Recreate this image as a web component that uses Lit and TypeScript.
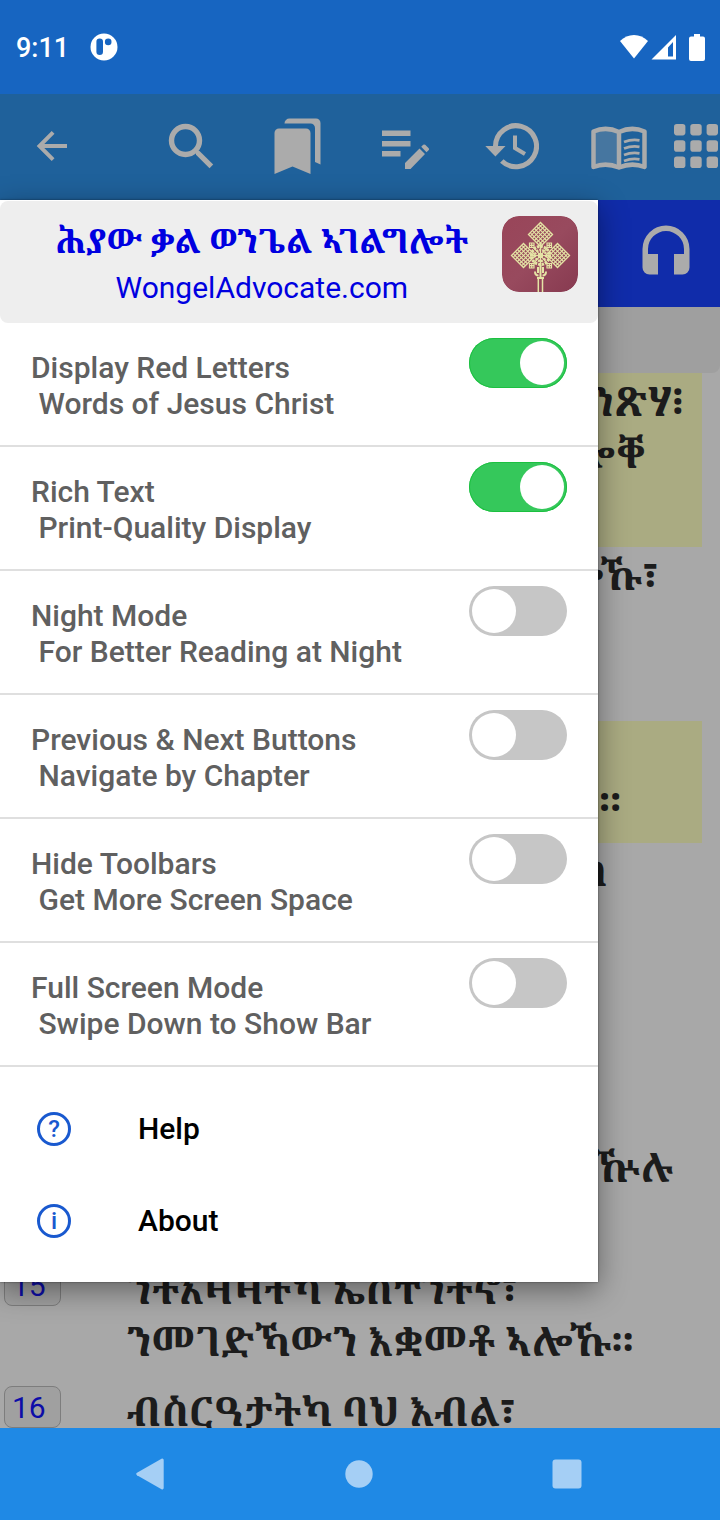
import { LitElement, html, css, svg, nothing } from "lit";
import { customElement, property, state } from "lit/decorators.js";
import { classMap } from "lit/directives/class-map.js";
import { styleMap } from "lit/directives/style-map.js";

interface Setting {
  title: string;
  detail: string;
  on: boolean;
}

/** A line with an inset is aligned to the right edge, that many pixels in. */
interface VerseLine {
  text: string;
  inset?: number;
}

interface Verse {
  number?: number;
  marked?: boolean;
  lines: VerseLine[];
}

const blank: VerseLine = { text: "" };

const verses: Verse[] = [
  { marked: true, lines: [{ text: "ንጽሃ፧", inset: 15 }, { text: "ሎቐ", inset: 53 }, blank] },
  { lines: [{ text: "ሎኹ፣", inset: 40 }, blank, blank] },
  { marked: true, lines: [blank, { text: "።", inset: 77 }] },
  { lines: [{ text: "ስ", inset: 91 }, blank] },
  { lines: [blank, blank] },
  { lines: [blank, { text: "ዅሉ", inset: 25 }, blank] },
  { number: 15, lines: [{ text: "ንትእዛዛትካ ኤስተንትኖ፣" }, { text: "ንመገድኻውን እቋመቶ ኣሎኹ።" }] },
  { number: 16, lines: [{ text: "ብስርዓታትካ ባህ እብል፣" }] },
];

@customElement("status-bar")
class StatusBar extends LitElement {
  static styles = css`
    :host {
      display: flex;
      align-items: center;
      height: 94px;
      padding: 0 15px 0 16px;
      background: #1765c1;
      color: #fff;
      box-sizing: border-box;
      flex: none;
    }
    .time {
      font: 500 27px/32px Roboto, sans-serif;
      margin-right: 21px;
      margin-top: 2px;
    }
    .signals {
      margin-left: auto;
      display: flex;
      align-items: center;
      gap: 3px;
    }
    .battery {
      margin-left: 10px;
    }
    svg {
      display: block;
      fill: currentColor;
    }
  `;
  render() {
    return html`
      <span class="time">9:11</span>
      <svg width="28" height="28" viewBox="0 0 28 28" aria-hidden="true">
        <path fill-rule="evenodd" d="M14 .5a13.500 13.500 0 1 0 0 27a13.500 13.500 0 1 0 0-27zM9.700 5.500a3.300 3.300 0 0 1 3.300 3.300v10a3.300 3.300 0 0 1-6.600 0v-10a3.300 3.300 0 0 1 3.300-3.300zM18.200 5.600a3.300 3.300 0 1 1 0 6.600a3.300 3.300 0 0 1 0-6.600z" />
      </svg>
      <div class="signals">
        <svg width="28" height="26" viewBox="0 0 28 26" aria-hidden="true"><path d="M14 24.500 0 7C4 3.300 8.700 1 14 1s10 2.300 14 6z" /></svg>
        <svg width="25" height="26" viewBox="0 0 25 26" aria-hidden="true"><path fill-rule="evenodd" d="M25 1v24.500H.5zM22 8l-5 5.500V22.500h5z" /></svg>
        <svg class="battery" width="16" height="27" viewBox="0 0 16 27" aria-hidden="true"><path d="M5 0h6v2.500h3a2 2 0 0 1 2 2V25a2 2 0 0 1-2 2H2a2 2 0 0 1-2-2V4.500a2 2 0 0 1 2-2h3z" /></svg>
      </div>
    `;
  }
}

@customElement("tool-bar")
class ToolBar extends LitElement {
  static styles = css`
    :host {
      display: grid;
      grid-template-columns: 104px 33px repeat(5, 1fr) 48px;
      height: 106px;
      box-sizing: border-box;
      padding-bottom: 2px;
      flex: none;
      background: #1f619b;
      color: #ababab;
    }
    button {
      border: 0;
      padding: 0;
      background: none;
      color: inherit;
      display: grid;
      place-items: center;
    }
    .back {
      grid-column: 1 / span 2;
      width: 104px;
    }
    svg {
      display: block;
      fill: currentColor;
    }
  `;
  render() {
    return html`
      <button class="back" aria-label="Back">
        <svg width="32" height="32" viewBox="0 0 32 32"><path d="M31 14v4H8.300l10.200 10.200-2.800 2.800L.7 16 15.700 1l2.800 2.800L8.300 14z" /></svg>
      </button>
      <button aria-label="Search">
        <svg width="46" height="46" viewBox="0 0 46 46">
          <circle cx="17.500" cy="17.500" r="14" fill="none" stroke="currentColor" stroke-width="5.400" />
          <path d="M31.500 28 45.200 41.500 41.500 45.200 28 31.700V28z" />
        </svg>
      </button>
      <button aria-label="Bookmarks">
        <svg width="48" height="58" viewBox="0 0 48 58">
          <path d="M5 11.500h27a4.500 4.500 0 0 1 4.500 4.500v41L18.500 49.500.5 57V16A4.500 4.500 0 0 1 5 11.500z" />
          <path d="M10.500 6.500A5 5 0 0 1 15.500 1.500H42a4.500 4.500 0 0 1 4.500 4.500v41.500L41 45V11a4.500 4.500 0 0 0-4.500-4.500z" />
        </svg>
      </button>
      <button aria-label="Notes">
        <svg width="48" height="46" viewBox="0 -2 48 46">
          <path d="M1 5.500h28.500v5.500H1zM1 16h28.500v5.500H1zM1 26h18.500v5.500H1zM24 38 38.500 23.500l5.500 5.500L29.500 44H24zM40.200 21.800l2-2a1.600 1.600 0 0 1 2 0l3.300 3.300a1.600 1.600 0 0 1 0 2.200l-2 2z" />
        </svg>
      </button>
      <button aria-label="History">
        <svg width="54" height="48" viewBox="0 0 54 48">
          <g fill="none" stroke="currentColor" stroke-width="5">
            <path d="M10.500 25v-1a20.500 20.500 0 1 1 6.300 15" />
            <path stroke-width="4" d="M30 13.500v12.500l10 6" />
          </g>
          <path d="M.3 24h20.200L10.400 34.500z" />
        </svg>
      </button>
      <button aria-label="Read">
        <svg width="58" height="52" viewBox="0 -6 58 52">
          <path opacity=".28" d="M4 6q12-5 24 0v33q-12-5-24 0z" />
          <path fill="none" stroke="currentColor" stroke-width="4.500" stroke-linejoin="round" d="M29 6Q16 0 3.500 5.500V41Q16 36 29 41.500Q42 36 54.500 41V5.500Q42 0 29 6zV41" />
          <path fill="none" stroke="currentColor" stroke-width="2.700" d="M34 16q7.500-3 15.500-1.700M34 22.500q7.500-3 15.500-1.700M34 29q7.500-3 15.500-1.700M34 35q7.500-3 15.500-1.700" />
        </svg>
      </button>
      <button aria-label="All books">
        <svg width="44" height="44" viewBox="0 0 44 44">
          ${[0, 16.300, 32.600].map((y) => [0, 16.300, 32.600].map((x) => svg`<rect x=${x} y=${y} width="11.400" height="11.400" rx="2.800" />`))}
        </svg>
      </button>
    `;
  }
}

@customElement("verse-list")
class VerseList extends LitElement {
  static styles = css`
    :host {
      display: block;
      font-family: "Noto Serif Ethiopic", "Noto Sans Ethiopic", "Abyssinica SIL", FreeSerif, serif;
    }
    .verse {
      display: grid;
      grid-template-columns: 123px 1fr;
      padding-right: 18px;
    }
    .number {
      justify-self: start;
      align-self: start;
      box-sizing: border-box;
      width: 57px;
      height: 42px;
      margin: 3px 0 0 4px;
      padding-left: 7px;
      border: 1px solid #7d7d7d;
      border-radius: 8px;
      background: #a0a0a0;
      color: #0d0da8;
      text-decoration: none;
      font: 30px/42px Roboto, sans-serif;
    }
    .text {
      grid-column: 2;
      padding: 2px 4px 16px;
      color: #1c1c1c;
    }
    .marked {
      background: #aaab82;
    }
    .line {
      height: 52px;
      font-size: 40px;
      font-weight: 700;
      line-height: 52px;
      white-space: nowrap;
    }
    .inset {
      display: flex;
      justify-content: flex-end;
    }
  `;
  render() {
    return verses.map(
      (verse) => html`
        <div class="verse">
          ${verse.number ? html`<a class="number" href="#verse-${verse.number}">${verse.number}</a>` : nothing}
          <div class=${classMap({ text: true, marked: !!verse.marked })}>
            ${verse.lines.map((line) =>
              line.inset === undefined
                ? html`<div class="line">${line.text}</div>`
                : html`<div class="line inset" style=${styleMap({ paddingRight: `${line.inset}px` })}>${line.text}</div>`
            )}
          </div>
        </div>
      `
    );
  }
}

@customElement("setting-row")
class SettingRow extends LitElement {
  @property() title = "";
  @property() detail = "";
  @property({ type: Boolean }) on = false;

  static styles = css`
    :host {
      display: block;
      border-bottom: 2px solid #dfdfdf;
    }
    .row {
      display: flex;
      justify-content: space-between;
      align-items: flex-start;
      height: 122px;
      box-sizing: border-box;
      padding: 15px 31px 0;
      font: 500 30px/36px Roboto, sans-serif;
      color: #606060;
    }
    .words {
      padding-top: 12px;
      white-space: pre;
    }
    .switch {
      appearance: none;
      flex: none;
      width: 98px;
      height: 50px;
      margin: 0;
      padding: 3px;
      box-sizing: border-box;
      border-radius: 25px;
      background: #c6c6c6;
      display: flex;
    }
    .switch::before {
      content: "";
      width: 44px;
      height: 44px;
      border-radius: 50%;
      background: #fff;
    }
    .switch:checked {
      background: #35c85b;
      box-shadow: inset 0 0 0 1px #1cc040;
      justify-content: flex-end;
    }
  `;
  render() {
    return html`
      <label class="row">
        <span class="words">${this.title}<br />${" " + this.detail}</span>
        <input class="switch" type="checkbox" role="switch" .checked=${this.on} />
      </label>
    `;
  }
}

@customElement("app-logo")
class AppLogo extends LitElement {
  static styles = css`
    :host {
      display: block;
      width: 76px;
      height: 76px;
      flex: none;
    }
    svg {
      display: block;
      border-radius: 17px;
    }
  `;
  render() {
    const lattice = [-6, -3, 0, 3, 6];
    const diamond = (x: number, y: number) => svg`
      <g transform="translate(${x} ${y}) rotate(45)">
        <rect x="-8.500" y="-8.500" width="17" height="17" stroke-width="1.300" />
        ${lattice.map((p) => svg`<path stroke-width="1.100" d="M${p}-8v16M-8 ${p}h16" />`)}
      </g>`;
    return html`
      <svg width="76" height="76" viewBox="0 0 76 76" role="img" aria-label="Wongel Advocate">
        <defs>
          <linearGradient id="cover" x1="0" y1="0" x2="1" y2="1">
            <stop offset="0" stop-color="#994559" />
            <stop offset=".5" stop-color="#984a5e" />
            <stop offset="1" stop-color="#873a50" />
          </linearGradient>
        </defs>
        <rect width="76" height="76" rx="17" fill="url(#cover)" />
        <g fill="none" stroke="#e5e4a5">
          ${diamond(38.500, 18.500)} ${diamond(21.500, 39.500)} ${diamond(55.500, 39.500)}
          <g stroke-width="1.200">
            <path d="M27.500 27h4.500v4.500h-4.500zM45 27h4.500v4.500H45zM27.500 47.500h4.500v4.500h-4.500zM45 47.500h4.500v4.500H45zM29.700 27v5M27 29.300h5M47.300 27v5M45 29.300h5M29.700 47v5M27 49.700h5M47.300 47v5M45 49.700h5" />
            <path d="M32 32l13 15M45 32 32 47M38.500 26v26M28 39.500h21" />
          </g>
          <circle cx="38.500" cy="39.500" r="9" stroke-width="3" stroke-dasharray="2.500 1" />
          <circle cx="38.500" cy="39.500" r="5.500" stroke-width="2.400" stroke-dasharray="2 1" />
          <circle cx="38.500" cy="39.500" r="2" stroke-width="1.600" />
          <path stroke-width="2" d="M38.500 49v14M36 51v6M41 51v6M33 55.500q0 4 3.500 4M44 55.500q0 4-3.500 4M35 62h7" />
          <path stroke-width="1.500" d="M36.300 62v14M40.500 62v14" />
        </g>
      </svg>
    `;
  }
}

@customElement("side-menu")
class SideMenu extends LitElement {
  @state() private settings: Setting[] = [
    { title: "Display Red Letters", detail: "Words of Jesus Christ", on: true },
    { title: "Rich Text", detail: "Print-Quality Display", on: true },
    { title: "Night Mode", detail: "For Better Reading at Night", on: false },
    { title: "Previous & Next Buttons", detail: "Navigate by Chapter", on: false },
    { title: "Hide Toolbars", detail: "Get More Screen Space", on: false },
    { title: "Full Screen Mode", detail: "Swipe Down to Show Bar", on: false },
  ];

  static styles = css`
    :host {
      display: block;
      padding-top: 1px;
      background: #fff;
      box-shadow: 0 8px 28px rgba(0, 0, 0, 0.42), 0 0 2px rgba(0, 0, 0, 0.5);
    }
    .header {
      display: flex;
      align-items: flex-start;
      height: 122px;
      box-sizing: border-box;
      padding: 15px 20px 0 22px;
      border-radius: 8px;
      background: #eee;
    }
    .names {
      flex: 1;
      text-align: center;
      color: #0000e0;
      white-space: nowrap;
    }
    .title {
      margin: 0;
      font: 700 34px/48px "Noto Serif Ethiopic", "Noto Sans Ethiopic", "Abyssinica SIL", FreeSerif, serif;
    }
    .site {
      color: inherit;
      text-decoration: none;
      font: 30px/48px Roboto, sans-serif;
    }
    .links {
      padding: 16px 0 15px;
    }
    .link {
      display: grid;
      grid-template-columns: 101px 1fr;
      align-items: center;
      height: 92px;
      padding-left: 37px;
      color: #000;
      text-decoration: none;
      font: 500 30px/36px Roboto, sans-serif;
    }
    .badge {
      box-sizing: border-box;
      width: 34px;
      height: 34px;
      border: 3px solid #1959cf;
      border-radius: 50%;
      color: #1959cf;
      text-align: center;
      font: 500 24px/28px Roboto, sans-serif;
    }
  `;
  render() {
    return html`
      <header class="header">
        <div class="names">
          <h1 class="title">ሕያው ቃል ወንጌል ኣገልግሎት</h1>
          <a class="site" href="#site">WongelAdvocate.com</a>
        </div>
        <app-logo></app-logo>
      </header>
      ${this.settings.map((s) => html`<setting-row .title=${s.title} .detail=${s.detail} .on=${s.on}></setting-row>`)}
      <nav class="links">
        <a class="link" href="#help"><span class="badge" aria-hidden="true">?</span>Help</a>
        <a class="link" href="#about"><span class="badge" aria-hidden="true">i</span>About</a>
      </nav>
    `;
  }
}

@customElement("app-root")
class AppRoot extends LitElement {
  static styles = css`
    :host {
      display: flex;
      flex-direction: column;
      height: 100vh;
      overflow: hidden;
      background: #a8a8a8;
    }
    .stage {
      position: relative;
      flex: 1;
      min-height: 0;
    }
    .page {
      height: 100%;
      overflow: hidden;
    }
    .audio {
      display: flex;
      justify-content: flex-end;
      align-items: center;
      height: 107px;
      box-sizing: border-box;
      padding: 0 30px 8px;
      background: #102caa;
    }
    .audio button {
      border: 0;
      padding: 0;
      background: none;
      color: #ababab;
    }
    .audio svg {
      display: block;
    }
    .heading {
      height: 66px;
      border-radius: 0 0 8px 8px;
      background: #9f9f9f;
    }
    .menu {
      position: absolute;
      top: 0;
      left: 0;
      width: 83%;
    }
    .keys {
      display: flex;
      flex: none;
      justify-content: space-between;
      align-items: center;
      height: 92px;
      padding: 0 121px 0 118px;
      background: #1f89e5;
      position: relative;
    }
    .keys button {
      display: grid;
      place-items: center;
      width: 64px;
      height: 64px;
      border: 0;
      padding: 0;
      background: none;
      color: #a5cff5;
    }
  `;
  render() {
    return html`
      <status-bar></status-bar>
      <tool-bar></tool-bar>
      <main class="stage">
        <div class="page">
          <div class="audio">
            <button aria-label="Listen">
              <svg width="48" height="50" viewBox="0 0 48 50" fill="currentColor">
                <path d="M24 .5A23.500 23.500 0 0 0 .5 24v18.500a7 7 0 0 0 7 7h8.500V29H6v-5a18 18 0 0 1 36 0v5H32v20.500h8.500a7 7 0 0 0 7-7V24A23.500 23.500 0 0 0 24 .5z" />
              </svg>
            </button>
          </div>
          <div class="heading"></div>
          <verse-list></verse-list>
        </div>
        <side-menu class="menu"></side-menu>
      </main>
      <nav class="keys">
        <button aria-label="Back">
          <svg width="28" height="32" viewBox="0 0 28 32" fill="currentColor"><path d="M25.500.8A1.500 1.500 0 0 1 27.700 2v28a1.500 1.500 0 0 1-2.200 1.200L1 17.200a1.500 1.500 0 0 1 0-2.400z" /></svg>
        </button>
        <button aria-label="Home">
          <svg width="28" height="28" viewBox="0 0 28 28" fill="currentColor"><circle cx="14" cy="14" r="13.700" /></svg>
        </button>
        <button aria-label="Recent">
          <svg width="30" height="30" viewBox="0 0 30 30" fill="currentColor"><rect width="29" height="29" x=".5" y=".5" rx="3" /></svg>
        </button>
      </nav>
    `;
  }
}
